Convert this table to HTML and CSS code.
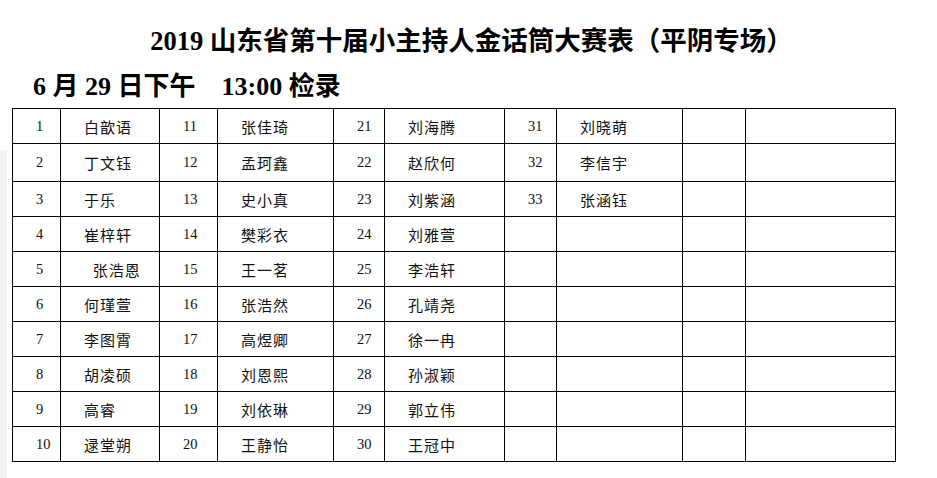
FILE: index.html
```html
<!DOCTYPE html>
<html lang="zh-CN">
<head>
<meta charset="utf-8">
<title>2019 山东省第十届小主持人金话筒大赛表（平阴专场）</title>
<link rel="stylesheet" href="styles.css">
</head>
<body>
<div class="page">
  <h1 class="title">2019 山东省第十届小主持人金话筒大赛表（平阴专场）</h1>
  <h2 class="sub">6 月 29 日下午&nbsp;&nbsp;&nbsp;&nbsp;13:00 检录</h2>
  <table class="roster">
    <colgroup>
      <col class="c-n1"><col class="c-m1">
      <col class="c-n2"><col class="c-m2">
      <col class="c-n3"><col class="c-m3">
      <col class="c-n4"><col class="c-m4">
      <col class="c-n5"><col class="c-m5">
    </colgroup>
    <tbody>
      <tr><td class="num">1</td><td class="name">白歆语</td><td class="num">11</td><td class="name">张佳琦</td><td class="num">21</td><td class="name">刘海腾</td><td class="num">31</td><td class="name">刘晓萌</td><td></td><td></td></tr>
      <tr class="tall"><td class="num">2</td><td class="name">丁文钰</td><td class="num">12</td><td class="name">孟珂鑫</td><td class="num">22</td><td class="name">赵欣何</td><td class="num">32</td><td class="name">李信宇</td><td></td><td></td></tr>
      <tr><td class="num">3</td><td class="name">于乐</td><td class="num">13</td><td class="name">史小真</td><td class="num">23</td><td class="name">刘紫涵</td><td class="num">33</td><td class="name">张涵钰</td><td></td><td></td></tr>
      <tr><td class="num">4</td><td class="name">崔梓轩</td><td class="num">14</td><td class="name">樊彩衣</td><td class="num">24</td><td class="name">刘雅萱</td><td></td><td></td><td></td><td></td></tr>
      <tr><td class="num">5</td><td class="name">&nbsp;&nbsp;张浩恩</td><td class="num">15</td><td class="name">王一茗</td><td class="num">25</td><td class="name">李浩轩</td><td></td><td></td><td></td><td></td></tr>
      <tr><td class="num">6</td><td class="name">何瑾萱</td><td class="num">16</td><td class="name">张浩然</td><td class="num">26</td><td class="name">孔靖尧</td><td></td><td></td><td></td><td></td></tr>
      <tr><td class="num">7</td><td class="name">李图霄</td><td class="num">17</td><td class="name">高煜卿</td><td class="num">27</td><td class="name">徐一冉</td><td></td><td></td><td></td><td></td></tr>
      <tr><td class="num">8</td><td class="name">胡凌硕</td><td class="num">18</td><td class="name">刘恩熙</td><td class="num">28</td><td class="name">孙淑颖</td><td></td><td></td><td></td><td></td></tr>
      <tr><td class="num">9</td><td class="name">高睿</td><td class="num">19</td><td class="name">刘依琳</td><td class="num">29</td><td class="name">郭立伟</td><td></td><td></td><td></td><td></td></tr>
      <tr><td class="num">10</td><td class="name">逯堂朔</td><td class="num">20</td><td class="name">王静怡</td><td class="num">30</td><td class="name">王冠中</td><td></td><td></td><td></td><td></td></tr>
    </tbody>
  </table>
</div>
</body>
</html>
```
FILE: styles.css
```css
html, body {
  margin: 0;
  padding: 0;
  background: #fff;
}
body {
  background: #fff linear-gradient(#f3f3f3, #f3f3f3) no-repeat 0 150px / 7px 100%;
  width: 937px;
  height: 478px;
  overflow: hidden;
  color: #000;
}
.page {
  padding-top: 23px;
}
.title {
  margin: 0;
  font-family: "Liberation Serif", "Noto Sans CJK SC", serif;
  font-weight: 700;
  font-size: 26.5px;
  line-height: 36px;
  text-align: center;
  padding-left: 6px;
}
.sub {
  margin: 10px 0 0 33px;
  font-family: "Liberation Serif", "Noto Sans CJK SC", serif;
  font-weight: 700;
  font-size: 26px;
  line-height: 36px;
}
.roster {
  margin: 3px 0 0 12px;
  border-collapse: collapse;
  table-layout: fixed;
  width: 884px;
}
.roster td {
  border: 1px solid #000;
  height: 34px;
  padding: 0 0 0 23px;
  vertical-align: middle;
  white-space: nowrap;
  overflow: hidden;
}
.roster tr.tall td {
  height: 37px;
}
.num {
  font-family: "Liberation Serif", serif;
  font-size: 14.5px;
  color: #111;
}
.name {
  font-family: "Noto Sans CJK SC", sans-serif;
  font-size: 15px;
  letter-spacing: 1px;
  color: #111;
}
.c-n1 { width: 48px; }
.c-m1 { width: 99px; }
.c-n2 { width: 58px; }
.c-m2 { width: 116px; }
.c-n3 { width: 51px; }
.c-m3 { width: 120px; }
.c-n4 { width: 52px; }
.c-m4 { width: 126px; }
.c-n5 { width: 63px; }
.c-m5 { width: 150px; }
```
